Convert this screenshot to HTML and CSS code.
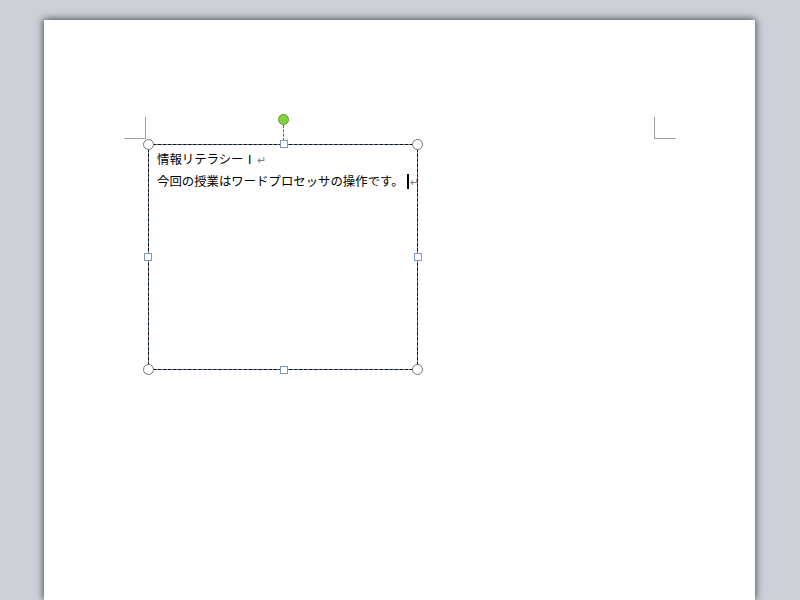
FILE: index.html
```html
<!DOCTYPE html>
<html lang="ja">
<head>
<meta charset="utf-8">
<link rel="stylesheet" href="styles.css">
</head>
<body>
<div class="page">
  <span class="mark mark-tl"></span>
  <span class="mark mark-tr"></span>
  <div class="shape">
    <div class="text">
      <p class="line">情報リテラシーⅠ<span class="ret">↵</span></p>
      <p class="line">今回の授業はワードプロセッサの操作です。<span class="caret"></span><span class="ret">↵</span></p>
    </div>
    <span class="rot-line"></span>
    <span class="rot"></span>
    <span class="h c tl"></span>
    <span class="h c tr"></span>
    <span class="h c bl"></span>
    <span class="h c br"></span>
    <span class="h s tm"></span>
    <span class="h s bm"></span>
    <span class="h s ml"></span>
    <span class="h s mr"></span>
  </div>
</div>
</body>
</html>
```

FILE: styles.css
```css
html, body {
  margin: 0;
  height: 100%;
  overflow: hidden;
}
body {
  background: #cdd1d7;
  padding: 20px 0 0 44px;
  box-sizing: border-box;
  font-family: "Noto Sans CJK JP", sans-serif;
}
.page {
  position: relative;
  width: 711px;
  height: 580px;
  background: #ffffff;
  box-shadow: -2px 0 6px rgba(60,64,72,0.45), 2px 0 6px rgba(60,64,72,0.45), 0 -2px 8px rgba(60,64,72,0.35);
  padding: 124px 0 0 104px;
  box-sizing: border-box;
}
.mark {
  position: absolute;
  border-color: #a0a0a0;
  border-style: solid;
  width: 21px;
  height: 21px;
  top: 97px;
}
.mark-tl {
  left: 80px;
  border-width: 0 1px 1px 0;
}
.mark-tr {
  left: 610px;
  border-width: 0 0 1px 1px;
}
.shape {
  position: relative;
  width: 270px;
  height: 226px;
  box-sizing: border-box;
  border: 1px solid #5a7698;
}
.shape::before {
  content: "";
  position: absolute;
  inset: -1px;
  border: 1px dashed #111;
  pointer-events: none;
}
.text {
  padding: 3px 8px;
  font-size: 12.4px;
  line-height: 22px;
  color: #000;
}
.line {
  margin: 0;
  white-space: nowrap;
}
.ret {
  color: #808080;
  font-size: 11px;
  margin-left: 1px;
}
.caret {
  display: inline-block;
  width: 2px;
  height: 15px;
  background: #000;
  vertical-align: -3px;
  margin-left: 3px;
}
.rot-line {
  position: absolute;
  left: 134px;
  top: -20px;
  height: 16px;
  border-left: 1px dashed #3d6a9a;
}
.rot {
  position: absolute;
  left: 129px;
  top: -31px;
  width: 9px;
  height: 9px;
  border-radius: 50%;
  background: #7fd63a;
  border: 1px solid #5a9a30;
}
.h {
  position: absolute;
  background: #fff;
  box-sizing: border-box;
}
.c {
  width: 11px;
  height: 11px;
  border-radius: 50%;
  border: 1px solid #777;
}
.s {
  width: 8px;
  height: 8px;
  border: 1px solid #7d9ac0;
}
.tl { left: -6px; top: -6px; }
.tr { right: -6px; top: -6px; }
.bl { left: -6px; bottom: -6px; }
.br { right: -6px; bottom: -6px; }
.tm { left: 131px; top: -5px; }
.bm { left: 131px; bottom: -5px; }
.ml { left: -5px; top: 108px; }
.mr { right: -5px; top: 108px; }
```
